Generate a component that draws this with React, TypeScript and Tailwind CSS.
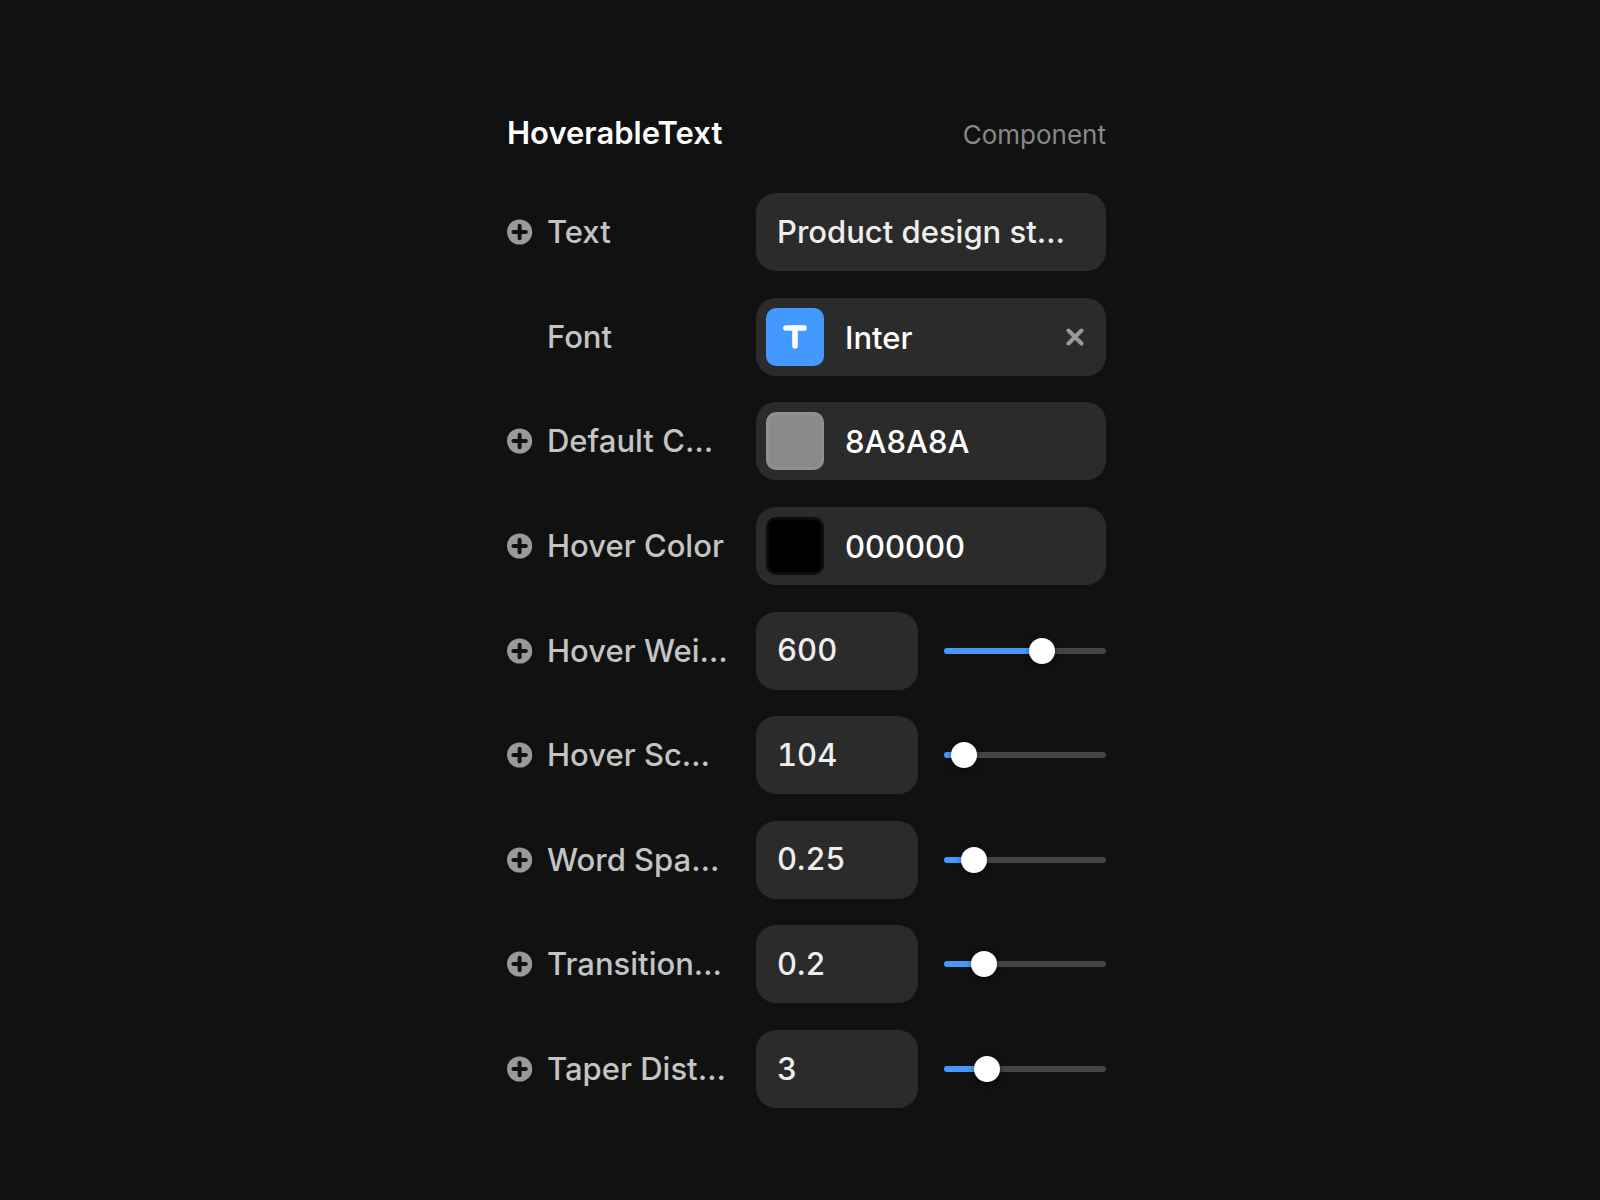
import { useState } from "react";
import type { ReactNode } from "react";

const PlusIcon = () => (
  <svg viewBox="0 0 26 26" className="h-[26px] w-[26px]" aria-hidden="true">
    <circle cx="12.6" cy="13" r="12.6" fill="#999999" />
    <path d="M12.6 6.8v12.4M6.4 13h12.4" stroke="#111111" strokeWidth="4" strokeLinecap="round" />
  </svg>
);

const TypeIcon = () => (
  <svg viewBox="0 0 24 24" className="h-6 w-6" fill="none" stroke="#ffffff" strokeLinecap="round" aria-hidden="true">
    <path d="M3 3h18" strokeWidth="5.6" />
    <path d="M12 3v18" strokeWidth="5.6" />
  </svg>
);

const CloseIcon = () => (
  <svg viewBox="0 0 18 18" className="h-[18px] w-[18px]" aria-hidden="true">
    <path d="M2.5 2.5l13 13M15.5 2.5l-13 13" stroke="#999999" strokeWidth="4" strokeLinecap="round" />
  </svg>
);

type RowProps = {
  id: string;
  label: string;
  addable?: boolean;
  children: ReactNode;
};

const Row = ({ id, label, addable = true, children }: RowProps) => (
  <div className="grid grid-cols-[223px_minmax(0,1fr)] items-center gap-[26px]">
    <div className="flex items-center gap-[14px]">
      {addable ? (
        <button type="button" aria-label={`Add ${label} variable`} className="shrink-0">
          <PlusIcon />
        </button>
      ) : (
        <span className="w-[26px] shrink-0" />
      )}
      <label htmlFor={id} className="whitespace-nowrap text-[#c4c4c4]">
        {label}
      </label>
    </div>
    {children}
  </div>
);

const TextField = ({ id, value }: { id: string; value: string }) => (
  <input
    id={id}
    type="text"
    defaultValue={value}
    className="h-[78px] w-full min-w-0 rounded-[20px] bg-[#2b2b2b] px-[21px] pb-[2px] text-[#eeeeee] outline-none"
  />
);

const ColorField = ({ id, value }: { id: string; value: string }) => (
  <div className="flex h-[78px] items-center gap-[21px] rounded-[20px] bg-[#2b2b2b] px-[10px]">
    <button
      type="button"
      aria-label="Pick color"
      className="h-[58px] w-[58px] shrink-0 rounded-[10px] inset-ring-[3px] inset-ring-white/5"
      style={{ backgroundColor: `#${value}` }}
    />
    <input
      id={id}
      type="text"
      defaultValue={value}
      className="w-full min-w-0 bg-transparent pt-[2px] text-white outline-none"
    />
  </div>
);

type SliderFieldProps = {
  id: string;
  label: string;
  initial: number;
  min: number;
  max: number;
};

const SliderField = ({ id, label, initial, min, max }: SliderFieldProps) => {
  const [value, setValue] = useState(initial);
  const percent = ((value - min) / (max - min)) * 100;

  return (
    <div className="grid grid-cols-2 items-center gap-[26px]">
      <input
        id={id}
        type="text"
        value={value}
        onChange={(e) => setValue(Number(e.target.value) || 0)}
        className="h-[78px] w-full min-w-0 rounded-[20px] bg-[#2b2b2b] px-[21px] pb-[2px] text-[#eeeeee] tabular-nums outline-none"
      />
      <input
        type="range"
        aria-label={label}
        min={min}
        max={max}
        step="any"
        value={value}
        onChange={(e) => setValue(Number(e.target.value))}
        className="h-[6px] w-full min-w-0 appearance-none rounded-full outline-none [&::-webkit-slider-thumb]:h-[26px] [&::-webkit-slider-thumb]:w-[26px] [&::-webkit-slider-thumb]:appearance-none [&::-webkit-slider-thumb]:rounded-full [&::-webkit-slider-thumb]:bg-white [&::-webkit-slider-thumb]:shadow-[0_2px_5px_rgba(0,0,0,0.5)]"
        style={{ background: `linear-gradient(to right, #4499ff ${percent}%, #444444 ${percent}%)` }}
      />
    </div>
  );
};

const sliders = [
  { id: "hover-weight", label: "Hover Wei…", initial: 600, min: 100, max: 900 },
  { id: "hover-scale", label: "Hover Sc…", initial: 104, min: 100, max: 180 },
  { id: "word-spacing", label: "Word Spa…", initial: 0.25, min: 0, max: 2 },
  { id: "transition", label: "Transition…", initial: 0.2, min: 0, max: 1 },
  { id: "taper-distance", label: "Taper Dist…", initial: 3, min: 1, max: 10 },
];

const App = () => {
  return (
    <main className="flex min-h-screen flex-col bg-[#111111] pt-[113px] pb-[92px] pl-[13px] font-['Inter',sans-serif] text-[31px] leading-[40px] font-medium">
      <div className="mx-auto flex w-full max-w-[599px] flex-1 flex-col gap-10">
        <header className="flex h-10 items-baseline justify-between">
          <h1 className="font-semibold text-white">HoverableText</h1>
          <span className="text-[26px] font-normal text-[#888888]">Component</span>
        </header>

        <form className="flex flex-1 flex-col justify-between">
          <Row id="text" label="Text">
            <TextField id="text" value="Product design st…" />
          </Row>

          <Row id="font" label="Font" addable={false}>
            <div className="flex h-[78px] items-center gap-[21px] rounded-[20px] bg-[#2b2b2b] pr-[22px] pl-[10px]">
              <span className="flex h-[58px] w-[58px] shrink-0 items-center justify-center rounded-[10px] bg-[#4499ff]">
                <TypeIcon />
              </span>
              <input
                id="font"
                type="text"
                defaultValue="Inter"
                className="w-full min-w-0 bg-transparent pt-[2px] text-white outline-none"
              />
              <button type="button" aria-label="Clear font" className="shrink-0">
                <CloseIcon />
              </button>
            </div>
          </Row>

          <Row id="default-color" label="Default C…">
            <ColorField id="default-color" value="8A8A8A" />
          </Row>

          <Row id="hover-color" label="Hover Color">
            <ColorField id="hover-color" value="000000" />
          </Row>

          {sliders.map((slider) => (
            <Row key={slider.id} id={slider.id} label={slider.label}>
              <SliderField {...slider} />
            </Row>
          ))}
        </form>
      </div>
    </main>
  );
};

export default App;
